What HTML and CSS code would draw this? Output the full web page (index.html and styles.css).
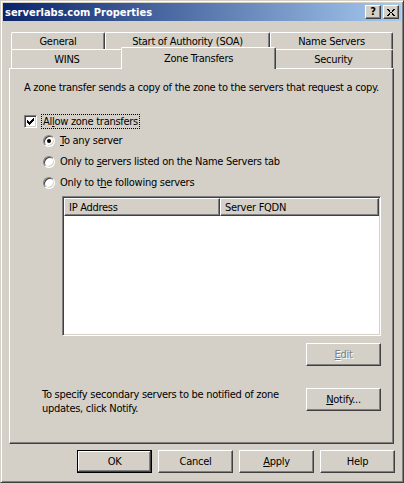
FILE: index.html
```html
<!DOCTYPE html>
<html lang="en">
<head>
    <meta charset="UTF-8">
    <meta name="viewport" content="width=device-width, initial-scale=1.0">
    <title>serverlabs.com Properties</title>
    <link rel="stylesheet" href="styles.css">
</head>
<body>
    <div class="window">
        <div class="titlebar">
            <span class="title">serverlabs.com Properties</span>
            <div class="caption-buttons">
                <div class="caption-btn help-btn">?</div>
                <div class="caption-btn">
                    <svg width="8" height="7" viewBox="0 0 8 7">
                        <path d="M0 0h2v1H0z M1 1h2v1H1z M2 2h1v1H2z M3 3h2v1H3z M2 4h1v1H2z M1 5h2v1H1z M0 6h2v1H0z
                                 M6 0h2v1H6z M5 1h2v1H5z M5 2h1v1H5z M5 4h1v1H5z M5 5h2v1H5z M6 6h2v1H6z" fill="#000"/>
                    </svg>
                </div>
            </div>
        </div>

        <div class="dialog">
            <div class="tabs">
                <div class="tab-row">
                    <div class="tab" style="width: 94px">General</div>
                    <div class="tab" style="width: 165px">Start of Authority (SOA)</div>
                    <div class="tab" style="width: 123px">Name Servers</div>
                </div>
                <div class="tab-row front">
                    <div class="tab" style="width: 112px">WINS</div>
                    <div class="tab active" style="width: 155px">Zone Transfers</div>
                    <div class="tab" style="width: 119px">Security</div>
                </div>
            </div>

            <div class="panel">
                <p class="desc">A zone transfer sends a copy of the zone to the servers that request a copy.</p>

                <div class="check-row">
                    <span class="checkbox">
                        <svg width="13" height="13" viewBox="0 0 13 13">
                            <path d="M3 5h1v3H3z M4 6h1v3H4z M5 7h1v3H5z M6 6h1v3H6z M7 5h1v3H7z M8 4h1v3H8z M9 3h1v3H9z" fill="#000"/>
                        </svg>
                    </span>
                    <span class="focus-label">Al<u>l</u>ow zone transfers</span>
                </div>

                <div class="radio-row first">
                    <span class="radio checked"></span>
                    <span><u>T</u>o any server</span>
                </div>
                <div class="radio-row">
                    <span class="radio"></span>
                    <span>Only to <u>s</u>ervers listed on the Name Servers tab</span>
                </div>
                <div class="radio-row">
                    <span class="radio"></span>
                    <span>Only to t<u>h</u>e following servers</span>
                </div>

                <div class="list-view">
                    <div class="list-header">
                        <div class="col-head" style="width: 156px">IP Address</div>
                        <div class="col-head" style="width: 158px">Server FQDN</div>
                    </div>
                </div>

                <div class="edit-row">
                    <div class="btn disabled"><u>E</u>dit</div>
                </div>

                <div class="notify-row">
                    <p class="notify-text">To specify secondary servers to be notified of zone<br>updates, click Notify.</p>
                    <div class="btn"><u>N</u>otify...</div>
                </div>
            </div>

            <div class="actions">
                <div class="btn default">OK</div>
                <div class="btn">Cancel</div>
                <div class="btn"><u>A</u>pply</div>
                <div class="btn">Help</div>
            </div>
        </div>
    </div>
</body>
</html>
```

FILE: styles.css
```css
body {
    margin: 0;
    padding: 0;
    font-family: "DejaVu Sans Condensed", "Liberation Sans", sans-serif;
    font-size: 11px;
    letter-spacing: -0.28px;
    color: #000;
    background-color: #d4d0c8;
}

u {
    text-decoration: underline;
    text-underline-offset: 1px;
}

/* window frame */
.window {
    box-sizing: border-box;
    width: 404px;
    height: 483px;
    padding: 2px;
    background-color: #d4d0c8;
    border: 1px solid;
    border-color: #d4d0c8 #404040 #404040 #d4d0c8;
    box-shadow: inset 1px 1px #fff, inset -1px -1px #808080;
}

.titlebar {
    height: 18px;
    padding: 0 2px;
    display: flex;
    align-items: center;
    justify-content: space-between;
    background: linear-gradient(to right, #0a246a, #a6caf0);
}

.title {
    color: #fff;
    font-weight: bold;
    letter-spacing: 0;
}

.caption-buttons {
    display: flex;
    gap: 2px;
}

.caption-btn {
    box-sizing: border-box;
    width: 16px;
    height: 14px;
    display: flex;
    align-items: center;
    justify-content: center;
    background-color: #d4d0c8;
    border: 1px solid;
    border-color: #fff #404040 #404040 #fff;
    box-shadow: inset -1px -1px #808080;
}

.help-btn {
    font-weight: bold;
    font-size: 11px;
    line-height: 12px;
    letter-spacing: 0;
}

/* dialog body */
.dialog {
    padding: 11px 0 0 6px;
}

.tab-row {
    display: flex;
    margin-left: 2px;
    height: 17px;
}

.tab-row.front {
    height: 19px;
}

.tab {
    box-sizing: border-box;
    height: 100%;
    display: flex;
    align-items: center;
    justify-content: center;
    background-color: #d4d0c8;
    border-top: 1px solid #fff;
    border-left: 1px solid #fff;
    border-right: 1px solid #404040;
    border-radius: 2px 2px 0 0;
    box-shadow: inset -1px 0 #808080;
    white-space: nowrap;
}

.tab.active {
    position: relative;
    z-index: 2;
    height: 22px;
    margin: -2px -2px 0;
    padding-bottom: 1px;
}

.panel {
    box-sizing: border-box;
    position: relative;
    width: 385px;
    height: 376px;
    padding: 12px 0 0 14px;
    border: 1px solid;
    border-color: #fff #404040 #404040 #fff;
    box-shadow: inset -1px -1px #808080;
}

.desc {
    margin: 0;
    line-height: 13px;
    white-space: nowrap;
}

.check-row {
    display: flex;
    align-items: center;
    height: 15px;
    margin-top: 20px;
}

.checkbox {
    box-sizing: border-box;
    width: 13px;
    height: 13px;
    display: flex;
    background-color: #fff;
    border: 1px solid;
    border-color: #808080 #fff #fff #808080;
    box-shadow: inset 1px 1px #404040, inset -1px -1px #d4d0c8;
}

.checkbox svg {
    margin: -1px;
}

.focus-label {
    margin-left: 4px;
    padding: 0 1px;
    line-height: 13px;
    border: 1px dotted #000;
}

.radio-row {
    display: flex;
    align-items: center;
    height: 13px;
    margin-top: 8px;
    margin-left: 19px;
}

.radio-row.first {
    margin-top: 5px;
}

.radio {
    box-sizing: border-box;
    position: relative;
    width: 12px;
    height: 12px;
    margin-right: 5px;
    border-radius: 50%;
    background-color: #fff;
    border: 1px solid;
    border-color: #808080 #fff #fff #808080;
    box-shadow: inset 1px 1px #404040, inset -1px -1px #d4d0c8;
}

.radio.checked::after {
    content: "";
    position: absolute;
    left: 3px;
    top: 3px;
    width: 4px;
    height: 4px;
    border-radius: 50%;
    background-color: #000;
}

/* server list */
.list-view {
    box-sizing: border-box;
    width: 319px;
    height: 140px;
    margin: 7px 0 0 38px;
    background-color: #fff;
    border: 1px solid;
    border-color: #808080 #fff #fff #808080;
    box-shadow: inset 1px 1px #404040, inset -1px -1px #d4d0c8;
    padding: 1px;
}

.list-header {
    display: flex;
    height: 18px;
}

.col-head {
    box-sizing: border-box;
    height: 100%;
    padding-left: 4px;
    display: flex;
    align-items: center;
    background-color: #d4d0c8;
    border: 1px solid;
    border-color: #fff #404040 #404040 #fff;
    box-shadow: inset -1px -1px #808080;
}

.col-head + .col-head {
    flex: 1;
}

/* buttons */
.btn {
    box-sizing: border-box;
    width: 75px;
    height: 23px;
    display: flex;
    align-items: center;
    justify-content: center;
    background-color: #d4d0c8;
    border: 1px solid;
    border-color: #fff #404040 #404040 #fff;
    box-shadow: inset -1px -1px #808080, inset 1px 1px #d4d0c8;
}

.btn.default {
    border-color: #000;
    box-shadow: inset -1px -1px #404040, inset 1px 1px #fff, inset -2px -2px #808080;
}

.btn.disabled {
    color: #808080;
    text-shadow: 1px 1px #fff;
}

.edit-row {
    display: flex;
    justify-content: flex-end;
    width: 319px;
    margin: 7px 0 0 38px;
}

.notify-row {
    display: flex;
    justify-content: space-between;
    width: 339px;
    margin: 22px 0 0 18px;
}

.notify-text {
    margin: 0;
    line-height: 14px;
}

.actions {
    display: flex;
    justify-content: flex-end;
    gap: 6px;
    width: 386px;
    margin-top: 6px;
}
```
